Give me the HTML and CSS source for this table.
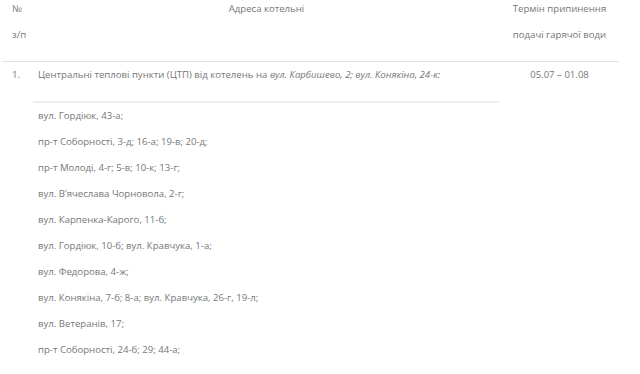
FILE: index.html
```html
<!DOCTYPE html>
<html lang="uk">
<head>
<meta charset="utf-8">
<title>Графік припинення подачі гарячої води</title>
<link rel="stylesheet" href="styles.css">
</head>
<body>
<table class="schedule">
  <thead>
    <tr>
      <th class="col-num"><div class="ln">№</div><div class="ln">з/п</div></th>
      <th class="col-addr"><div class="ln">Адреса котельні</div></th>
      <th class="col-term"><div class="ln">Термін припинення</div><div class="ln">подачі гарячої води</div></th>
    </tr>
  </thead>
  <tbody>
    <tr>
      <td class="col-num"><div class="ln">1.</div></td>
      <td class="col-addr">
        <div class="ln">Центральні теплові пункти (ЦТП) від котелень на <em>вул. Карбишево, 2; вул. Конякіна, 24-к:</em></div>
        <ul class="sub">
          <li class="ln">вул. Гордіюк, 43-а;</li>
          <li class="ln">пр-т Соборності, 3-д; 16-а; 19-в; 20-д;</li>
          <li class="ln">пр-т Молоді, 4-г; 5-в; 10-к; 13-г;</li>
          <li class="ln">вул. В’ячеслава Чорновола, 2-г;</li>
          <li class="ln">вул. Карпенка-Карого, 11-б;</li>
          <li class="ln">вул. Гордіюк, 10-б; вул. Кравчука, 1-а;</li>
          <li class="ln">вул. Федорова, 4-ж;</li>
          <li class="ln">вул. Конякіна, 7-б; 8-а; вул. Кравчука, 26-г, 19-л;</li>
          <li class="ln">вул. Ветеранів, 17;</li>
          <li class="ln">пр-т Соборності, 24-б; 29; 44-а;</li>
        </ul>
      </td>
      <td class="col-term"><div class="ln">05.07 – 01.08</div></td>
    </tr>
  </tbody>
</table>
</body>
</html>
```

FILE: styles.css
```css
html, body {
  margin: 0;
  padding: 0;
  background: #ffffff;
}
body {
  font-family: "Open Sans", "Liberation Sans", sans-serif;
  font-size: 9.6px;
  color: #777777;
}
.schedule {
  border-collapse: collapse;
  margin-left: 2px;
  width: 617px;
}
.schedule th,
.schedule td {
  vertical-align: top;
  font-weight: normal;
  padding: 0;
}
.ln {
  line-height: 18px;
  white-space: nowrap;
}
.ln + .ln {
  margin-top: 8px;
}
.schedule th {
  padding-bottom: 17px;
  border-bottom: 1px solid #e2e2e2;
}
.schedule td {
  padding-top: 4px;
}
.col-num {
  width: 21px;
  padding-left: 10px !important;
  text-align: left;
}
.col-addr {
  width: 467px;
  padding-left: 0;
  text-align: center;
}
.schedule td.col-addr {
  text-align: left;
}
.schedule td.col-addr > .ln {
  padding-left: 5px;
}
.col-term {
  text-align: center;
}
.sub {
  list-style: none;
  margin: 17px 0 0 0;
  padding: 4px 0 0 5px;
  border-top: 2px solid #efefef;
}
.sub .ln {
  margin-top: 0;
  margin-bottom: 8px;
}
em {
  font-style: italic;
}
```
